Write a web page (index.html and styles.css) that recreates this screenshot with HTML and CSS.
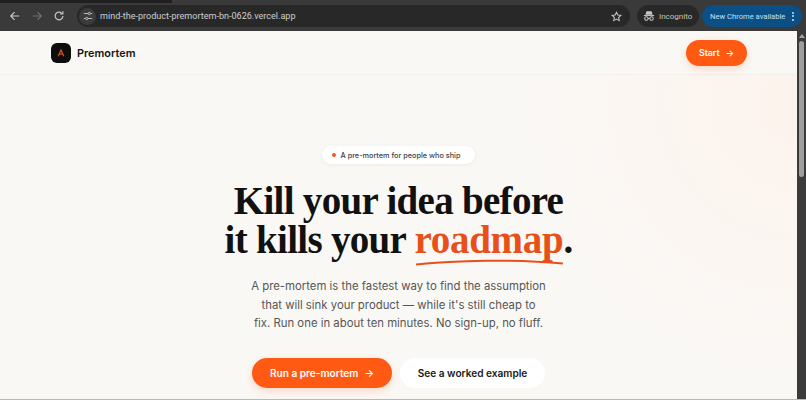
FILE: index.html
```html
<!DOCTYPE html>
<html lang="en">
<head>
    <meta charset="UTF-8">
    <title>Premortem</title>
    <link rel="stylesheet" href="styles.css">
</head>
<body>
    <!-- Browser toolbar -->
    <div class="chrome">
        <div class="tab-strip"></div>
        <div class="toolbar">
            <svg class="nav-icon" width="12" height="12" viewBox="0 0 14 14"><path d="M12 7H2.500M6.500 2.500 2 7l4.500 4.500" /></svg>
            <svg class="nav-icon dim" width="12" height="12" viewBox="0 0 14 14"><path d="M2 7h9.500M7.500 2.500 12 7l-4.500 4.500" /></svg>
            <svg class="nav-icon" width="12" height="12" viewBox="0 0 14 14"><path d="M11.500 7A4.500 4.500 0 1 1 10 3.600M11.500 1.500v3h-3" /></svg>
            <div class="omnibox">
                <span class="tune">
                    <svg width="12" height="12" viewBox="0 0 12 12"><path d="M1 3h5M9 3h2M1 9h2M6 9h5" /><circle cx="7.500" cy="3" r="1.400" /><circle cx="4.500" cy="9" r="1.400" /></svg>
                </span>
                <span class="url">mind-the-product-premortem-bn-0626.vercel.app</span>
                <svg class="star" width="11" height="11" viewBox="0 0 14 14"><path d="M7 1.500 8.700 5.100l3.900.5-2.900 2.700.8 3.900L7 10.300l-3.500 1.900.8-3.900L1.400 5.600l3.900-.5z" /></svg>
            </div>
            <div class="incognito">
                <svg width="12" height="12" viewBox="0 0 14 14"><path class="hat" d="M4 1.500h6l1.200 4H2.800z" /><path d="M1 6.500h12" /><circle cx="4" cy="10" r="2" /><circle cx="10" cy="10" r="2" /><path d="M6 10h2" /></svg>
                <span>Incognito</span>
            </div>
            <div class="update">
                <span>New Chrome available</span>
                <span class="dots"><i></i><i></i><i></i></span>
            </div>
        </div>
    </div>

    <div class="viewport">
        <main class="page">
            <header class="nav">
                <div class="brand">
                    <span class="logo">
                        <svg width="8" height="8" viewBox="0 0 10 10"><path d="M1.500 9 5 1.200 8.500 9M3 6.500h4" /></svg>
                    </span>
                    <span class="brand-name">Premortem</span>
                </div>
                <a class="btn-start" href="#">Start <span class="arrow">&rarr;</span></a>
            </header>

            <section class="hero">
                <div class="pill"><span class="pill-dot"></span>A pre-mortem for people who ship</div>
                <h1>Kill your idea before<br>it kills your <span class="accent">roadmap<svg class="squiggle" viewBox="0 0 150 10" preserveAspectRatio="none"><path d="M1 8C40 3 100 1 149 7" /></svg></span>.</h1>
                <p class="lead">A pre-mortem is the fastest way to find the assumption<br>that will sink your product — while it's still cheap to<br>fix. Run one in about ten minutes. No sign-up, no fluff.</p>
                <div class="actions">
                    <a class="btn-primary" href="#">Run a pre-mortem <span class="arrow">&rarr;</span></a>
                    <a class="btn-white" href="#">See a worked example</a>
                </div>
            </section>
        </main>

        <div class="scrollbar">
            <span class="scroll-up"></span>
            <span class="scroll-thumb"></span>
        </div>
    </div>
</body>
</html>
```

FILE: styles.css
```css
* {
    margin: 0;
    padding: 0;
    box-sizing: border-box;
}

html, body {
    height: 400px;
    overflow: hidden;
}

body {
    font-family: Inter, 'Noto Sans', sans-serif;
    background: #faf8f5;
    display: flex;
    flex-direction: column;
}

/* Browser toolbar */
.chrome {
    height: 31px;
    background: #3a3a3a;
    flex-shrink: 0;
    font-family: Roboto, sans-serif;
}

.tab-strip {
    height: 3px;
    width: 172px;
    background: #202020;
}

.toolbar {
    height: 26px;
    display: flex;
    align-items: center;
    padding-left: 9px;
}

.nav-icon {
    fill: none;
    stroke: #c7c7c7;
    stroke-width: 1.400;
    margin-right: 10px;
    flex-shrink: 0;
}

.nav-icon.dim {
    stroke: #6f6f6f;
}

.omnibox {
    width: 553px;
    height: 22px;
    margin-left: 2px;
    background: #282828;
    border-radius: 11px;
    display: flex;
    align-items: center;
    padding: 0 8px 0 2px;
}

.tune {
    width: 17px;
    height: 17px;
    border-radius: 50%;
    background: #3c3c3c;
    display: flex;
    align-items: center;
    justify-content: center;
    margin-right: 4px;
}

.tune svg {
    fill: none;
    stroke: #d0d0d0;
    stroke-width: 1;
    width: 10px;
    height: 10px;
}

.url {
    flex: 1;
    color: #cfcfcf;
    font-size: 9.050px;
}

.star {
    fill: none;
    stroke: #c7c7c7;
    stroke-width: 1.300;
}

.incognito {
    margin-left: 7px;
    width: 62px;
    height: 22px;
    border-radius: 11px;
    background: #282828;
    display: flex;
    align-items: center;
    gap: 4px;
    padding-left: 6px;
    color: #c4c4c4;
    font-size: 8px;
    white-space: nowrap;
}

.incognito svg {
    fill: none;
    stroke: #c7c7c7;
    stroke-width: 1.200;
    flex-shrink: 0;
}

.incognito .hat {
    fill: #c7c7c7;
    stroke: none;
}

.update {
    margin-left: 3px;
    width: 100px;
    height: 22px;
    border-radius: 11px;
    background: #0c4f85;
    color: #c2e0f8;
    font-size: 7.600px;
    display: flex;
    align-items: center;
    justify-content: space-between;
    padding: 0 8px;
    white-space: nowrap;
}

.dots {
    display: flex;
    flex-direction: column;
    gap: 1.500px;
}

.dots i {
    display: block;
    width: 2px;
    height: 2px;
    border-radius: 50%;
    background: #c2e0f8;
}

/* Page */
.viewport {
    flex: 1;
    display: flex;
    min-height: 0;
    border-bottom: 1px solid #b9b9b5;
}

.page {
    flex: 1;
    min-width: 0;
    background: radial-gradient(circle at 100% 20%, #fdf3ed 0, #faf8f5 32%);
}

.scrollbar {
    width: 9px;
    background: #3b3b3b;
    display: flex;
    flex-direction: column;
    align-items: center;
    padding-top: 3px;
}

.scroll-up {
    width: 0;
    height: 0;
    border-left: 3px solid transparent;
    border-right: 3px solid transparent;
    border-bottom: 4px solid #a5a5a5;
}

.scroll-thumb {
    margin-top: 3px;
    width: 5px;
    height: 136px;
    border-radius: 3px;
    background: #9e9e9e;
}

.nav {
    height: 44px;
    background: #faf8f5;
    border-bottom: 1px solid #f3efea;
    display: flex;
    align-items: center;
    justify-content: space-between;
    padding: 0 50px 0 51px;
}

.brand {
    display: flex;
    align-items: center;
    gap: 6px;
}

.logo {
    width: 20px;
    height: 20px;
    border-radius: 6px;
    background: #0d0d0d;
    display: flex;
    align-items: center;
    justify-content: center;
}

.logo svg {
    fill: none;
    stroke: #c9521e;
    stroke-width: 1.600;
}

.brand-name {
    font-size: 10.900px;
    font-weight: 600;
    color: #141414;
}

.btn-start {
    width: 61px;
    height: 26px;
    border-radius: 13px;
    background: #ff5a14;
    color: #fff;
    font-size: 8.800px;
    font-weight: 600;
    text-decoration: none;
    display: flex;
    align-items: center;
    justify-content: center;
    gap: 6px;
    box-shadow: 0 3px 8px rgba(255, 90, 20, 0.200);
}

.hero {
    display: flex;
    flex-direction: column;
    align-items: center;
    padding-top: 71px;
}

.pill {
    height: 18px;
    padding: 0 15px 0 10px;
    border-radius: 9px;
    background: #fff;
    box-shadow: 0 1px 4px rgba(0, 0, 0, 0.060);
    color: #3f3f3f;
    font-size: 7.300px;
    font-weight: 500;
    display: flex;
    align-items: center;
    gap: 5px;
}

.pill-dot {
    width: 4px;
    height: 4px;
    border-radius: 50%;
    background: #f0591f;
}

h1 {
    margin-top: 17px;
    font-family: 'Liberation Serif', serif;
    font-size: 39px;
    font-weight: 700;
    line-height: 39px;
    letter-spacing: -0.700px;
    text-align: center;
    color: #111;
}

.accent {
    position: relative;
    color: #e8501a;
    letter-spacing: -0.300px;
}

.squiggle {
    position: absolute;
    left: 0;
    bottom: -5px;
    width: 100%;
    height: 8px;
    fill: none;
    stroke: #e8501a;
    stroke-width: 2.500;
}

.lead {
    margin-top: 18px;
    color: #555;
    font-size: 11.350px;
    line-height: 18.500px;
    text-align: center;
}

.actions {
    margin-top: 25px;
    display: flex;
    gap: 8px;
}

.btn-primary, .btn-white {
    height: 30px;
    border-radius: 15px;
    font-size: 10.100px;
    font-weight: 600;
    text-decoration: none;
    display: flex;
    align-items: center;
    justify-content: center;
}

.btn-primary {
    width: 140px;
    gap: 6px;
    background: #ff5a14;
    color: #fff;
    box-shadow: 0 3px 8px rgba(255, 90, 20, 0.200);
}

.btn-white {
    width: 145px;
    background: #fff;
    color: #1a1a1a;
}
```
